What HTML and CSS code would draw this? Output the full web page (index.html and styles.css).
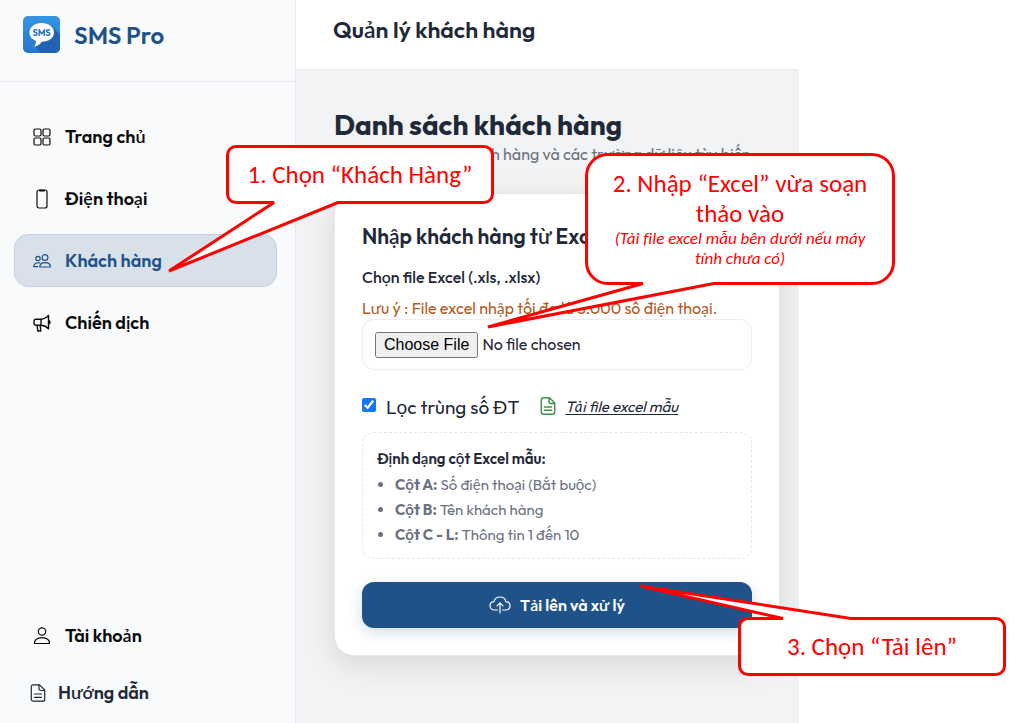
FILE: index.html
```html
<!DOCTYPE html>
<html lang="vi">
<head>
    <meta charset="UTF-8">
    <meta name="viewport" content="width=device-width, initial-scale=1.0">
    <title>SMS Pro - Quản lý khách hàng</title>
    <link rel="stylesheet" href="styles.css">
</head>
<body>
    <div class="app">
        <aside class="sidebar">
            <div class="brand">
                <svg class="logo" viewBox="0 0 37 37" aria-hidden="true">
                    <defs>
                        <linearGradient id="logoBg" x1="0" y1="0" x2="0" y2="1">
                            <stop offset="0" stop-color="#3795e0"/>
                            <stop offset="1" stop-color="#2478cb"/>
                        </linearGradient>
                        <clipPath id="logoClip"><rect width="37" height="37" rx="5"/></clipPath>
                    </defs>
                    <g clip-path="url(#logoClip)">
                        <rect width="37" height="37" fill="url(#logoBg)"/>
                        <path d="M28 10l9 8v19H18l-6-7z" fill="#2162b3"/>
                        <path d="M18.500 7C11.500 7 6.500 11.200 6.500 16.500c0 4 2.600 7 6.500 8.400 0 2.400-.6 4.200-2 5.800 3.600-.4 6.200-2.200 7.800-4.900C25.800 25.800 31 22 31 16.500 31 11.200 25.500 7 18.500 7z" fill="#fff"/>
                        <text x="18.500" y="19.500" class="logo-text">SMS</text>
                    </g>
                </svg>
                <span class="brand-name">SMS Pro</span>
            </div>

            <nav class="menu">
                <a href="#" class="menu-item">
                    <svg class="icon" viewBox="0 0 18 18"><rect x="1" y="1" width="7" height="7" rx="1.500"/><rect x="10" y="1" width="7" height="7" rx="1.500"/><rect x="1" y="10" width="7" height="7" rx="1.500"/><rect x="10" y="10" width="7" height="7" rx="1.500"/></svg>
                    Trang chủ
                </a>
                <a href="#" class="menu-item">
                    <svg class="icon" viewBox="0 0 18 18"><rect x="4" y="0" width="10" height="18" rx="2"/><path d="M7 .7h4" stroke-width="1.800"/></svg>
                    Điện thoại
                </a>
                <a href="#" class="menu-item active">
                    <svg class="icon" viewBox="0 0 18 18"><circle cx="12" cy="5.500" r="2.900"/><path d="M6.800 15c0-3 2.300-4.400 5.200-4.400s5.500 1.400 5.500 4.400z"/><circle cx="5" cy="6.500" r="2.200"/><path d="M6.800 10.900C3.200 10.200.8 11.800.6 14.600h4.200"/></svg>
                    Khách hàng
                </a>
                <a href="#" class="menu-item">
                    <svg class="icon" viewBox="0 0 18 18"><path d="M8 5.200C11 5 13.500 3.800 15.500 1.400v13.400c-2-2.200-4.500-3.300-7.500-3.500H3a2 2 0 0 1-2-2V7.200a2 2 0 0 1 2-2zM8 5.200v6M15.500 6.500c2 .2 2 3.400 0 3.600M4.200 11.500l.6 5.500h3l-.6-5.300" stroke-width="1.400"/></svg>
                    Chiến dịch
                </a>
            </nav>

            <nav class="menu menu-bottom">
                <a href="#" class="menu-item">
                    <svg class="icon" viewBox="0 0 18 18"><circle cx="9" cy="4.500" r="3.700"/><path d="M1.500 16.500c-.4-3.500 2.800-5.900 7.500-5.900s7.900 2.400 7.500 5.900z"/></svg>
                    Tài khoản
                </a>
                <a href="#" class="menu-item guide">
                    <svg class="icon" viewBox="0 0 18 18"><path d="M10.500.8H4.300a2 2 0 0 0-2 2v12.400a2 2 0 0 0 2 2h9.400a2 2 0 0 0 2-2V6zM10 1v3.500a2 2 0 0 0 2 2h3.500M5.500 10h7M5.500 13.300h7"/></svg>
                    Hướng dẫn
                </a>
            </nav>
        </aside>

        <main class="main">
            <header class="topbar">Quản lý khách hàng</header>

            <div class="content">
                <h1>Danh sách khách hàng</h1>
                <p class="subtitle">Quản lý thông tin khách hàng và các trường dữ liệu tùy biến</p>

                <form class="card">
                    <h2>Nhập khách hàng từ Excel</h2>
                    <label for="excelFile" class="file-label">Chọn file Excel (.xls, .xlsx)</label>
                    <p class="note">Lưu ý : File excel nhập tối đa là 5.000 số điện thoại.</p>
                    <input type="file" id="excelFile" class="file-input" accept=".xls,.xlsx">

                    <div class="options">
                        <input type="checkbox" id="dedupe" checked>
                        <label for="dedupe">Lọc trùng số ĐT</label>
                        <svg class="icon sample-icon" viewBox="0 0 18 18" aria-hidden="true"><path d="M10.500.8H4.300a2 2 0 0 0-2 2v12.400a2 2 0 0 0 2 2h9.400a2 2 0 0 0 2-2V6zM10 1v3.500a2 2 0 0 0 2 2h3.500M5.500 10h7M5.500 13.300h7"/></svg>
                        <a href="#" class="sample-link">Tải file excel mẫu</a>
                    </div>

                    <div class="format-box">
                        <strong>Định dạng cột Excel mẫu:</strong>
                        <ul>
                            <li><b>Cột A:</b> Số điện thoại (Bắt buộc)</li>
                            <li><b>Cột B:</b> Tên khách hàng</li>
                            <li><b>Cột C - L:</b> Thông tin 1 đến 10</li>
                        </ul>
                    </div>

                    <button type="button" class="upload-btn">
                        <svg class="upload-icon" viewBox="0 0 22 18" aria-hidden="true"><path d="M8.500 14H5.500C2.800 14 1 12.100 1 9.800c0-2.200 1.600-3.900 3.900-4.100C5.600 2.700 8 1 11 1s5.300 1.800 5.800 4.600c2.500.1 4.200 1.800 4.200 4.200S19.200 14 16.600 14h-3M11 17V7M8 9.800L11 6.800l3 3"/></svg>
                        Tải lên và xử lý
                    </button>
                </form>
            </div>
        </main>
    </div>

    <!-- step notes over the page -->
    <div class="callout step-1">
        <svg class="bubble" viewBox="0 0 268 59" aria-hidden="true"><path d="M10 1.500H258A8.500 8.500 0 0 1 266.500 10V49A8.500 8.500 0 0 1 258 57.500H112L-57 126L48 57.500H10A8.500 8.500 0 0 1 1.500 49V10A8.500 8.500 0 0 1 10 1.500z"/></svg>
        <p>1. Chọn “Khách Hàng”</p>
    </div>
    <div class="callout step-2">
        <svg class="bubble" viewBox="0 0 310 132" aria-hidden="true"><path d="M23 1.500H287A21.500 21.500 0 0 1 308.500 23V109A21.500 21.500 0 0 1 287 130.500H129L-97 174L58 130.500H23A21.500 21.500 0 0 1 1.500 109V23A21.500 21.500 0 0 1 23 1.500z"/></svg>
        <p>2. Nhập “Excel” vừa soạn thảo vào</p>
        <p class="hint">(Tải file excel mẫu bên dưới nếu máy tính chưa có)</p>
    </div>
    <div class="callout step-3">
        <svg class="bubble" viewBox="0 0 268 59" aria-hidden="true"><path d="M10 1.500H45L-98-31L113 1.500H258A8.500 8.500 0 0 1 266.500 10V49A8.500 8.500 0 0 1 258 57.500H10A8.500 8.500 0 0 1 1.500 49V10A8.500 8.500 0 0 1 10 1.500z"/></svg>
        <p>3. Chọn “Tải lên”</p>
    </div>
</body>
</html>
```
FILE: styles.css
```css
* {
    box-sizing: border-box;
}
body {
    margin: 0;
    background: #fff;
    color: #1f2937;
    font-family: Outfit, Lato, "Open Sans", sans-serif;
    font-size: 16px;
    position: relative;
}
h1, h2, p {
    margin: 0;
}
.app {
    display: flex;
    min-height: 100vh;
    padding-right: 237px;
}

/* sidebar */
.sidebar {
    width: 296px;
    flex-shrink: 0;
    display: flex;
    flex-direction: column;
    background: #f9fafc;
    border-right: 1px solid #e5e7eb;
}
.brand {
    display: flex;
    align-items: center;
    gap: 14px;
    height: 82px;
    padding: 0 23px 12px;
    border-bottom: 1px solid #e5e7eb;
}
.logo {
    width: 37px;
    height: 37px;
}
.logo-text {
    font-size: 9px;
    font-weight: 700;
    text-anchor: middle;
    fill: #2574c4;
}
.brand-name {
    font-size: 24px;
    font-weight: 600;
    color: #1e5288;
}
.menu {
    display: flex;
    flex-direction: column;
    gap: 9px;
    padding: 28px 18px 0 14px;
}
.menu-item {
    display: flex;
    align-items: center;
    gap: 14px;
    height: 53px;
    padding: 0 18px;
    border: 1px solid transparent;
    border-radius: 14px;
    color: #0b0b0c;
    font-size: 18px;
    font-weight: 600;
    text-decoration: none;
}
.menu-item.active {
    background: #d8e0e9;
    border-color: #c5cfed;
    color: #1e5288;
}
.menu-bottom {
    margin-top: auto;
    padding: 0 18px 4px 14px;
    gap: 4px;
}
.menu-item.guide {
    gap: 11px;
    padding: 0 14px;
    color: #1f2937;
}
.icon {
    width: 18px;
    height: 18px;
    flex-shrink: 0;
    fill: none;
    stroke: currentColor;
    stroke-width: 1.2;
    stroke-linejoin: round;
    stroke-linecap: round;
    overflow: visible;
}

/* main */
.main {
    flex: 1;
    min-width: 0;
    overflow: hidden;
    background: #f2f3f5;
}
.topbar {
    height: 70px;
    padding: 0 37px 10px;
    display: flex;
    align-items: center;
    background: #fff;
    border-bottom: 1px solid #e5e7eb;
    font-size: 23px;
    font-weight: 600;
}
.content {
    padding: 38px 19px 0 38px;
}
h1 {
    font-size: 28px;
    line-height: 34px;
    font-weight: 700;
}
.subtitle {
    margin-bottom: 27px;
    color: #6b7280;
    line-height: 24px;
    white-space: nowrap;
}
.card {
    padding: 27px;
    background: #fff;
    border: 1px solid #e5e7eb;
    border-radius: 20px;
    box-shadow: 0 8px 30px rgba(0, 0, 0, 0.12);
}
h2 {
    font-size: 21px;
    line-height: 30px;
    font-weight: 600;
    margin-bottom: 14px;
    white-space: nowrap;
}
.file-label {
    display: block;
    line-height: 24px;
    font-weight: 500;
    margin-bottom: 8px;
}
.note {
    color: #b45a1e;
    line-height: 22px;
    white-space: nowrap;
}
.file-input {
    display: block;
    width: 100%;
    height: 51px;
    padding: 12px;
    border: 1px solid #ececee;
    border-radius: 12px;
    color: #1f2937;
    font-family: inherit;
    font-size: 16px;
}
.file-input::file-selector-button {
    padding: 2px 7px;
    font-family: "Liberation Sans", Arial, sans-serif;
    font-size: 16px;
}
.options {
    display: flex;
    align-items: center;
    height: 62px;
    padding-top: 11px;
}
.options input {
    width: 14px;
    height: 14px;
    margin: 0 10px 4px 0;
    accent-color: #1476ff;
}
.options label {
    font-size: 19px;
}
.sample-icon {
    margin: 0 8px 2px 20px;
    color: #3c9444;
    stroke-width: 1.5;
}
.sample-link {
    color: #1f2937;
    font-size: 15px;
    font-style: italic;
    text-underline-offset: 2px;
}
.format-box {
    padding: 12px 14px 11px;
    border: 1px dashed #e5e7eb;
    border-radius: 12px;
    color: #6b7280;
    font-size: 15px;
    line-height: 25px;
}
.format-box strong {
    display: block;
    line-height: 27px;
    font-weight: 600;
    color: #1f2937;
}
.format-box ul {
    margin: 0;
    padding-left: 18px;
}
.upload-btn {
    display: flex;
    align-items: center;
    justify-content: center;
    gap: 9px;
    width: 100%;
    height: 46px;
    margin-top: 23px;
    border: none;
    border-radius: 12px;
    background: #1e5288;
    box-shadow: 0 4px 14px rgba(30, 82, 136, 0.2);
    color: #fff;
    font-family: inherit;
    font-size: 16px;
    font-weight: 600;
}
.upload-icon {
    width: 22px;
    height: 18px;
    fill: none;
    stroke: #fff;
    stroke-width: 1.2;
    stroke-linecap: round;
    stroke-linejoin: round;
}

/* callouts */
.callout {
    position: absolute;
    display: flex;
    flex-direction: column;
    justify-content: center;
    color: #f00;
    font-family: Carlito, Lato, sans-serif;
    font-size: 25px;
    line-height: 30px;
    text-align: center;
    font-variant-ligatures: none;
}
.callout p {
    position: relative;
}
.bubble {
    position: absolute;
    inset: 0;
    width: 100%;
    height: 100%;
    overflow: visible;
    fill: #fff;
    stroke: #f00;
    stroke-width: 3;
    stroke-linejoin: bevel;
}
.step-1 {
    left: 226px;
    top: 145px;
    width: 268px;
    height: 59px;
}
.step-2 {
    left: 585px;
    top: 153px;
    width: 310px;
    height: 132px;
    padding: 0 24px;
}
.step-3 {
    left: 738px;
    top: 617px;
    width: 268px;
    height: 59px;
}
.callout .hint {
    font-size: 17px;
    line-height: 20px;
    font-style: italic;
}
```
